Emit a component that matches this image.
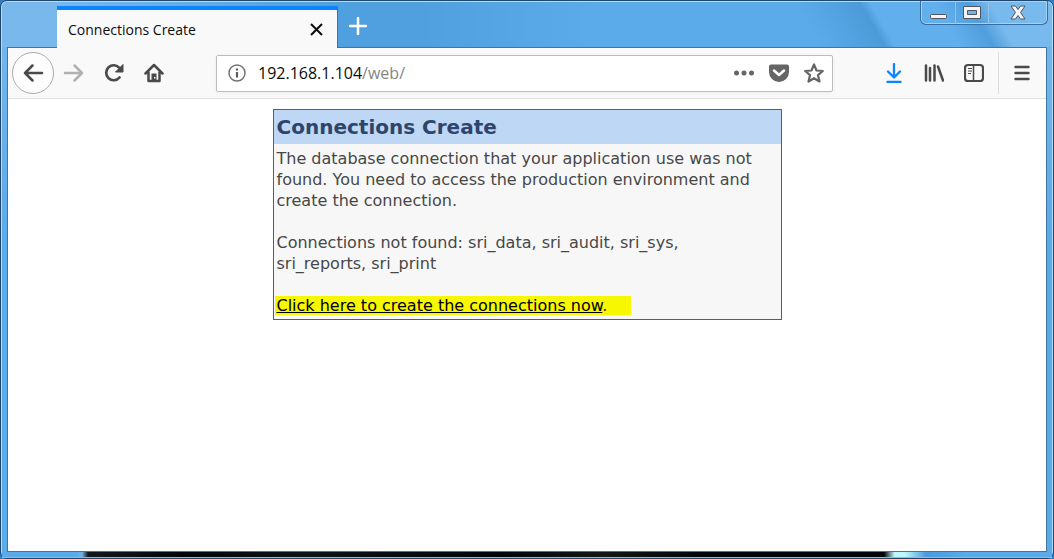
<script>
  const databases = ['sri_data', 'sri_audit', 'sri_sys', 'sri_reports', 'sri_print'];
</script>

<div class="window">
  <header class="titlebar">
    <div class="tab">
      <span>Connections Create</span>
      <button class="tab-close" aria-label="Close tab">
        <svg width="13" height="13" viewBox="0 0 13 13"><path d="M1 1l11 11M12 1L1 12" stroke="#0c0c0d" stroke-width="2" /></svg>
      </button>
    </div>
    <button class="new-tab" aria-label="New tab">
      <svg width="18" height="18" viewBox="0 0 18 18"><path d="M9 1v16M1 9h16" stroke="#fff" stroke-width="2.500" stroke-linecap="round" /></svg>
    </button>
    <div class="controls">
      <button class="minimize" aria-label="Minimize">
        <svg width="18" height="20" viewBox="0 0 18 20"><rect x="1.500" y="11.500" width="16" height="4" rx="1" fill="#f4f4f4" stroke="#50565f" /></svg>
      </button>
      <button class="maximize" aria-label="Maximize">
        <svg width="18" height="20" viewBox="0 0 18 20"><path d="M.5 3.500h17v12H.5z" fill="#f4f4f4" stroke="#50565f" /><path d="M4.500 7.500h9v4h-9z" fill="#72b4ec" stroke="#50565f" /></svg>
      </button>
      <button class="close" aria-label="Close window">
        <svg width="18" height="20" viewBox="0 0 18 20"><path d="M2 3h4.500L9 6.500 11.500 3H16l-4.500 6.500L16 16h-4.500L9 12.500 6.500 16H2l4.500-6.500z" fill="#f4f4f4" stroke="#50565f" stroke-linejoin="round" /></svg>
      </button>
    </div>
  </header>

  <div class="client">
    <nav class="toolbar" aria-label="Navigation">
      <button class="back" aria-label="Back">
        <svg width="22" height="20" viewBox="0 0 22 20"><path d="M20 10H3M10.500 2.500L3 10l7.500 7.500" fill="none" stroke="#4a4a4b" stroke-width="2.500" stroke-linecap="round" stroke-linejoin="round" /></svg>
      </button>
      <button aria-label="Forward" disabled>
        <svg width="22" height="20" viewBox="0 0 22 20"><path d="M2 10h17M11.500 2.500L19 10l-7.500 7.500" fill="none" stroke="#b1b1b2" stroke-width="2.500" stroke-linecap="round" stroke-linejoin="round" /></svg>
      </button>
      <button aria-label="Reload">
        <svg width="20" height="20" viewBox="0 0 20 20"><path d="M15.500 14.500A7.500 7.500 0 1 1 15.500 5" fill="none" stroke="#4a4a4b" stroke-width="2.700" stroke-linecap="round" /><path d="M19 1.500v7.500h-7.500z" fill="#4a4a4b" stroke="#4a4a4b" stroke-linejoin="round" /></svg>
      </button>
      <button aria-label="Home">
        <svg width="20" height="20" viewBox="0 0 20 20"><path d="M1.500 10.500L10 2l8.500 8.500M4.500 9.500v8.500h11V9.500" fill="none" stroke="#4a4a4b" stroke-width="2.500" stroke-linecap="round" stroke-linejoin="round" /><path d="M7.500 18v-7.500h5V18z" fill="#4a4a4b" /><path d="M10 14h1.500v1.500H10z" fill="#f9f9fa" /></svg>
      </button>

      <div class="urlbar">
        <svg width="18" height="18" viewBox="0 0 18 18"><circle cx="9" cy="9" r="8" fill="none" stroke="#737374" stroke-width="1.500" /><path d="M9 8v5.500M9 4.500v2" stroke="#5c5c5d" stroke-width="2.200" /></svg>
        <div class="address" role="textbox" aria-label="Address" tabindex="0">192.168.1.104<span>/web/</span></div>
        <button aria-label="Page actions">
          <svg width="22" height="20" viewBox="0 0 22 20" fill="#656566"><circle cx="3.500" cy="10" r="2.500" /><circle cx="11" cy="10" r="2.500" /><circle cx="18.500" cy="10" r="2.500" /></svg>
        </button>
        <button aria-label="Save to Pocket">
          <svg width="20" height="20" viewBox="0 0 20 20"><path d="M2 1.500h16a2 2 0 0 1 2 2V9a10 10 0 0 1-20 0V3.500a2 2 0 0 1 2-2z" fill="#656566" /><path d="M5 7.500l5 4.500 5-4.500" fill="none" stroke="#fff" stroke-width="2.500" stroke-linecap="round" stroke-linejoin="round" /></svg>
        </button>
        <button aria-label="Bookmark this page">
          <svg width="20" height="20" viewBox="0 0 20 20"><path d="M10 1.500l2.500 6 6.300.5-4.800 4.200 1.500 6.300L10 15.200l-5.500 3.300L6 12.200 1.200 8l6.300-.5z" fill="none" stroke="#656566" stroke-width="2.200" stroke-linejoin="round" /></svg>
        </button>
      </div>

      <button aria-label="Downloads">
        <svg width="18" height="20" viewBox="0 0 18 20"><path d="M9 1v13M3 8.500l6 6 6-6M2.500 19h13" fill="none" stroke="#0a84ff" stroke-width="2.300" stroke-linecap="round" stroke-linejoin="round" /></svg>
      </button>
      <button aria-label="Library">
        <svg width="20" height="20" viewBox="0 0 20 20"><path d="M2 2.500v15M6 5v12.500M10.500 2.500v15M14 3.500L19 17.500" stroke="#4a4a4b" stroke-width="2.500" stroke-linecap="round" /></svg>
      </button>
      <button aria-label="Sidebar">
        <svg width="20" height="20" viewBox="0 0 20 20"><rect x="1" y="2" width="18" height="16" rx="3" fill="none" stroke="#4a4a4b" stroke-width="2.200" /><path d="M9.500 3v14" stroke="#4a4a4b" stroke-width="1.500" /><path d="M4 5.500h4M4 8h4M4 10.500h3" stroke="#4a4a4b" /></svg>
      </button>
      <div class="divider"></div>
      <button aria-label="Menu">
        <svg width="18" height="20" viewBox="0 0 18 20"><path d="M2.500 4h13M2.500 10h13M2.500 16h13" stroke="#4a4a4b" stroke-width="2.400" stroke-linecap="round" /></svg>
      </button>
    </nav>

    <main>
      <section class="card">
        <h1>Connections Create</h1>
        <div class="message">
          <p>The database connection that your application use was not found. You need to access the production environment and create the connection.</p>
          <p>Connections not found: {databases.join(', ')}</p>
          <p><span class="highlight"><a href="#create">Click here to create the connections now</a>.</span></p>
        </div>
      </section>
    </main>
  </div>
  <div class="bottom-edge"></div>
</div>

<style>
  :global(body) {
    margin: 0;
    background: #2f7fc0;
  }
  * {
    box-sizing: border-box;
  }
  button {
    display: flex;
    align-items: center;
    justify-content: center;
    padding: 0;
    border: 0;
    background: none;
  }
  svg {
    display: block;
    flex: none;
  }
  .window {
    display: flex;
    flex-direction: column;
    min-height: 100vh;
    border: 1px solid #1f476d;
    border-radius: 7px;
    box-shadow: inset 0 0 0 1px #b4dcfb;
    background: linear-gradient(90deg, #78b8ec, #78b8ec 5%, #509fde 32%, #509fde 40%, #5baaea 56%, transparent 60%) 0 0 / 100% 46px no-repeat,
      linear-gradient(60deg, #5baaea 76%, #4c9bd9 82%, #62afed 83%, #62afed 89%, #509edc 92%, #78b9ee 94%) 0 0 / 100% 46px no-repeat,
      linear-gradient(#78b8ec, #5baaea 240px);
    font-family: "Open Sans", "Noto Sans", sans-serif;
  }
  .titlebar {
    display: flex;
    height: 46px;
    padding: 0 5px 0 56px;
  }
  .tab {
    position: relative;
    z-index: 1;
    display: flex;
    align-items: center;
    justify-content: space-between;
    width: 281px;
    margin: 5px 0 -1px;
    padding: 0 14px 0 11px;
    border-top: 4px solid #0a84ff;
    border-right: 1px solid #3975aa;
    background: #f9f9fa;
    color: #0c0c0d;
    font-size: 14px;
  }
  .new-tab {
    width: 40px;
    margin-top: 4px;
  }
  .controls {
    display: flex;
    height: 24px;
    margin-left: auto;
    border: 1px solid #376e9f;
    border-top: 0;
    border-radius: 0 0 6px 6px;
    box-shadow: inset 0 0 0 1px #a5d1f5;
  }
  .controls button {
    width: 33px;
    border-right: 1px solid #93c3e9;
  }
  .controls .minimize {
    width: 35px;
  }
  .controls .close {
    width: 58px;
    border: 0;
  }
  .client {
    display: flex;
    flex: 1;
    flex-direction: column;
    margin: 0 6px;
    border: 1px solid #41749f;
    background: #fff;
  }
  .toolbar {
    display: flex;
    align-items: center;
    height: 51px;
    padding: 0 4px;
    border-bottom: 1px solid #e0e0e1;
    background: #f9f9fa;
  }
  .toolbar > button {
    width: 40px;
    height: 40px;
  }
  .toolbar > .back {
    width: 42px;
    height: 42px;
    border: 1px solid #acacad;
    border-radius: 50%;
    background: #fdfdfd;
  }
  .urlbar {
    display: flex;
    flex: 1;
    align-items: center;
    height: 37px;
    margin: 0 41px 0 42px;
    padding: 0 1px 0 11px;
    border: 1px solid #bdbdbe;
    border-radius: 2px;
    box-shadow: 0 1px 4px #0000000d;
    background: #fff;
  }
  .urlbar button {
    width: 35px;
    height: 35px;
  }
  .address {
    flex: 1;
    min-width: 0;
    margin-left: 12px;
    color: #0c0c0d;
    font-size: 16px;
  }
  .address span {
    color: #858586;
  }
  .divider {
    width: 1px;
    height: 42px;
    margin: 0 3px 0 4px;
    background: #dedede;
  }
  main {
    flex: 1;
    padding: 10px;
  }
  .card {
    max-width: 509px;
    margin: 0 auto;
    border: 1px solid #42618d;
    background: #f7f7f7;
    color: #474747;
    font-family: "DejaVu Sans", Verdana, sans-serif;
    font-size: 16px;
    line-height: 21px;
  }
  h1 {
    margin: 0;
    padding: 1px 3px 0;
    background: #bdd7f5;
    color: #2f446b;
    font-size: 20px;
    line-height: 33px;
  }
  .message {
    padding: 4px 16px 3px 3px;
  }
  p {
    margin: 0 0 21px;
  }
  p:last-child {
    margin: 0;
  }
  .highlight {
    margin-left: -2px;
    padding: 0 24px 0 2px;
    background: #f7f700;
    color: #333300;
  }
  a {
    color: #000;
  }
  .bottom-edge {
    height: 6px;
    margin: 0 1px;
    border-bottom: 1px solid #a9b5bd;
    background: linear-gradient(90deg, #5baaea 75px, #75b1e5 80px, #15191b 86px, #020609 180px, #0d1215 300px, #020609 500px, #141617 600px, #020609 700px, #020609 84%, #bdf6ff 85%, #bdf6ff 86%, #4b9bdc 88%, #5baaea 92%);
  }
</style>
